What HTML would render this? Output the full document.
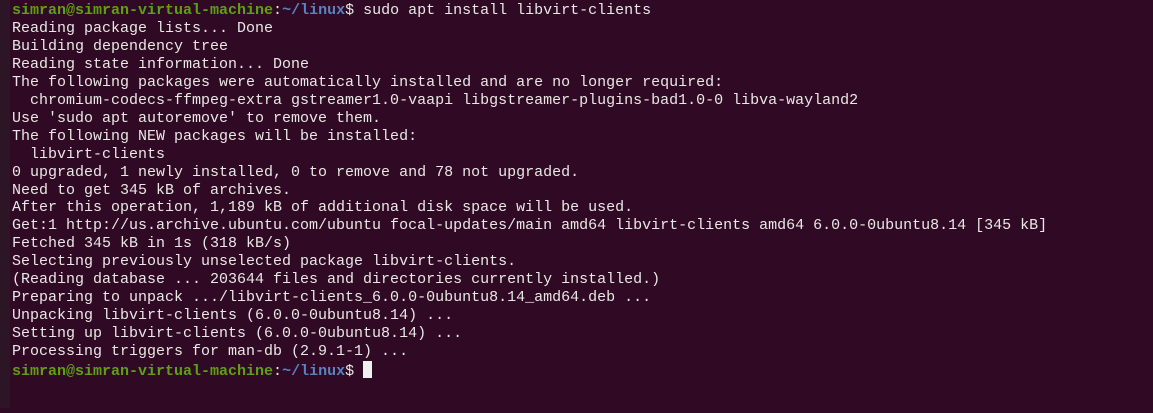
<!DOCTYPE html>
<html><head><meta charset="utf-8"><style>
html,body{margin:0;padding:0;}
body{width:1153px;height:413px;background:#300a24;overflow:hidden;position:relative;}
.strip{position:absolute;left:0;top:0;width:10px;height:408px;background:#2c1626;}
pre{position:absolute;left:12px;top:2px;margin:0;font-family:"Liberation Mono",monospace;font-size:15px;line-height:17.95px;color:#e8e8e4;white-space:pre;}
.g{color:#5fa012;font-weight:bold;}
.b{color:#5b82c0;font-weight:bold;}
.cur{display:inline-block;width:9px;height:17px;background:#f0f0f0;vertical-align:-3px;}
</style></head><body><div class="strip"></div><pre><span class="g">simran@simran-virtual-machine</span>:<span class="b">~/linux</span>$ sudo apt install libvirt-clients
Reading package lists... Done
Building dependency tree
Reading state information... Done
The following packages were automatically installed and are no longer required:
  chromium-codecs-ffmpeg-extra gstreamer1.0-vaapi libgstreamer-plugins-bad1.0-0 libva-wayland2
Use 'sudo apt autoremove' to remove them.
The following NEW packages will be installed:
  libvirt-clients
0 upgraded, 1 newly installed, 0 to remove and 78 not upgraded.
Need to get 345 kB of archives.
After this operation, 1,189 kB of additional disk space will be used.
Get:1 http://us.archive.ubuntu.com/ubuntu focal-updates/main amd64 libvirt-clients amd64 6.0.0-0ubuntu8.14 [345 kB]
Fetched 345 kB in 1s (318 kB/s)
Selecting previously unselected package libvirt-clients.
(Reading database ... 203644 files and directories currently installed.)
Preparing to unpack .../libvirt-clients_6.0.0-0ubuntu8.14_amd64.deb ...
Unpacking libvirt-clients (6.0.0-0ubuntu8.14) ...
Setting up libvirt-clients (6.0.0-0ubuntu8.14) ...
Processing triggers for man-db (2.9.1-1) ...
<span class="g">simran@simran-virtual-machine</span>:<span class="b">~/linux</span>$ <span class="cur"></span></pre></body></html>
